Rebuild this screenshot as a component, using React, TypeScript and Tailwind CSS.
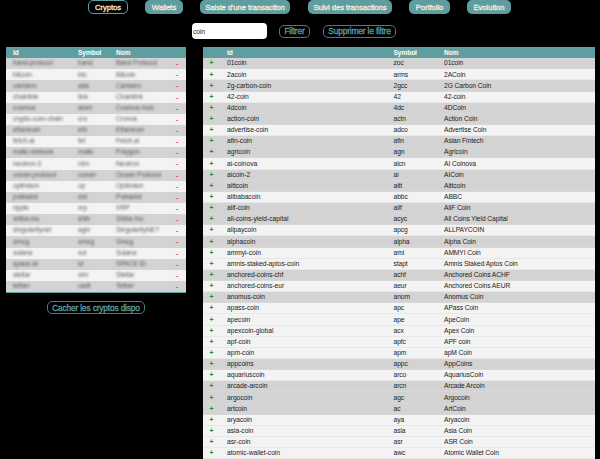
const tabs = ["Cryptos", "Wallets", "Saisie d'une transaction", "Suivi des transactions", "Portfolio", "Evolution"];
const tabStyles = [
  "w-[40px] border border-[#5f9ea0] bg-black",
  "w-[38px] ml-[17px] bg-[#5f9ea0]",
  "w-[90px] ml-[17px] bg-[#5f9ea0]",
  "w-[84px] ml-[18px] bg-[#5f9ea0]",
  "w-[41px] ml-[17px] bg-[#5f9ea0]",
  "w-[44px] ml-[17px] bg-[#5f9ea0]",
];

const owned: [string, string, string][] = [
  ["band-protocol", "band", "Band Protocol"],
  ["bitcoin", "btc", "Bitcoin"],
  ["cardano", "ada", "Cardano"],
  ["chainlink", "link", "Chainlink"],
  ["cosmos", "atom", "Cosmos Hub"],
  ["crypto-com-chain", "cro", "Cronos"],
  ["ethereum", "eth", "Ethereum"],
  ["fetch-ai", "fet", "Fetch.ai"],
  ["matic-network", "matic", "Polygon"],
  ["neutron-3", "ntrn", "Neutron"],
  ["ocean-protocol", "ocean", "Ocean Protocol"],
  ["optimism", "op", "Optimism"],
  ["polkadot", "dot", "Polkadot"],
  ["ripple", "xrp", "XRP"],
  ["shiba-inu", "shib", "Shiba Inu"],
  ["singularitynet", "agix", "SingularityNET"],
  ["smog", "smog", "Smog"],
  ["solana", "sol", "Solana"],
  ["space-id", "id", "SPACE ID"],
  ["stellar", "xlm", "Stellar"],
  ["tether", "usdt", "Tether"],
];

// The last field marks a shaded row.
const available: [string, string, string, boolean][] = [
  ["01coin", "zoc", "01coin", true],
  ["2acoin", "arms", "2ACoin", false],
  ["2g-carbon-coin", "2gcc", "2G Carbon Coin", true],
  ["42-coin", "42", "42-coin", false],
  ["4dcoin", "4dc", "4DCoin", true],
  ["action-coin", "actn", "Action Coin", true],
  ["advertise-coin", "adco", "Advertise Coin", false],
  ["afin-coin", "afin", "Asian Fintech", true],
  ["agricoin", "agn", "Agricoin", true],
  ["ai-coinova", "aicn", "AI Coinova", false],
  ["aicoin-2", "ai", "AICoin", true],
  ["aittcoin", "aitt", "Aittcoin", true],
  ["alibabacoin", "abbc", "ABBC", false],
  ["alif-coin", "alif", "AliF Coin", true],
  ["all-coins-yield-capital", "acyc", "All Coins Yield Capital", true],
  ["allpaycoin", "apcg", "ALLPAYCOIN", false],
  ["alphacoin", "alpha", "Alpha Coin", true],
  ["ammyi-coin", "ami", "AMMYI Coin", false],
  ["amnis-staked-aptos-coin", "stapt", "Amnis Staked Aptos Coin", false],
  ["anchored-coins-chf", "achf", "Anchored Coins ACHF", true],
  ["anchored-coins-eur", "aeur", "Anchored Coins AEUR", false],
  ["anomus-coin", "anom", "Anomus Coin", true],
  ["apass-coin", "apc", "APass Coin", false],
  ["apecoin", "ape", "ApeCoin", false],
  ["apexcoin-global", "acx", "Apex Coin", false],
  ["apf-coin", "apfc", "APF coin", false],
  ["apm-coin", "apm", "apM Coin", false],
  ["appcoins", "appc", "AppCoins", true],
  ["aquariuscoin", "arco", "AquariusCoin", false],
  ["arcade-arcoin", "arcn", "Arcade Arcoin", true],
  ["argocoin", "agc", "Argocoin", true],
  ["artcoin", "ac", "ArtCoin", true],
  ["aryacoin", "aya", "Aryacoin", false],
  ["asia-coin", "asia", "Asia Coin", false],
  ["asr-coin", "asr", "ASR Coin", false],
  ["atomic-wallet-coin", "awc", "Atomic Wallet Coin", false],
];

const outline =
  "flex items-center justify-center rounded-[5px] border border-[#4a7c7e] pt-px text-[8.4px] tracking-[-0.17px] text-[#5f9ea0] [-webkit-text-stroke:0.3px_#5f9ea0]";
const leftGrid = "grid h-[11.15px] grid-cols-[65px_38px_56px_1fr] items-center pl-[7px]";
const rightGrid = "grid h-[11.15px] grid-cols-[24px_166.5px_50.5px_1fr] items-center";
const header = "bg-[#5f9ea0] pt-[0.5px] text-[6.6px] font-bold text-white";
const hidden = "text-[#333] opacity-80 blur-[1.2px]";

export default function App() {
  return (
    <div className="h-[459px] w-[600px] overflow-hidden whitespace-nowrap bg-black font-['Liberation_Sans',Arial,sans-serif] text-[6.7px] leading-none tracking-[-0.08px] text-[#222]">
      <nav className="flex h-[14px] pl-[88px]">
        {tabs.map((t, i) => (
          <button
            key={t}
            className={`flex h-[14px] shrink-0 items-center justify-center rounded-[5px] pt-px text-[7.7px] tracking-[-0.08px] text-[#faebd7] [-webkit-text-stroke:0.3px_#faebd7] ${tabStyles[i]}`}
          >
            {t}
          </button>
        ))}
      </nav>
      <div className="mt-[9px] flex h-[16px] items-center pl-[192px]">
        <input
          defaultValue="coin"
          className="h-[16px] w-[75px] rounded-[4px] bg-white pl-[1px] text-[6.7px] text-[#222] outline-none"
        />
        <button className={`ml-[12px] h-[13px] w-[31px] ${outline}`}>Filtrer</button>
        <button className={`ml-[13px] h-[13px] w-[73px] ${outline}`}>Supprimer le filtre</button>
      </div>
      <main className="mt-[8px] flex items-start pl-[6px]">
        <section className="w-[180px]">
          <div className="relative border-b border-[#5f9ea0]">
            <div className={`${leftGrid} ${header}`}>
              <span>Id</span>
              <span>Symbol</span>
              <span>Nom</span>
            </div>
            {owned.map(([id, symbol, name], i) => (
              <div key={id} className={`${leftGrid} ${i % 2 === 0 ? "bg-[#d3d3d3]" : "bg-[#f3f3f3]"}`}>
                <span className={hidden}>{id}</span>
                <span className={hidden}>{symbol}</span>
                <span className={hidden}>{name}</span>
                <span className="pl-[4px] text-[7px] font-bold text-[#ff3b3b]">-</span>
              </div>
            ))}
            <div className="absolute bottom-0 left-[4px] top-[11.5px] w-[158px] backdrop-blur-[0.6px]" />
          </div>
          <div className="mt-[8px] flex justify-center">
            <button className={`h-[13px] w-[98px] ${outline}`}>Cacher les cryptos dispo</button>
          </div>
        </section>
        <section className="ml-[17px] w-[391.5px]">
          <div className={`${rightGrid} ${header}`}>
            <span />
            <span>Id</span>
            <span>Symbol</span>
            <span>Nom</span>
          </div>
          {available.map(([id, symbol, name, shaded]) => (
            <div
              key={id}
              className={`${rightGrid} border-b pt-px ${shaded ? "border-[#d8d8d8] bg-[#d3d3d3]" : "border-[#e8e8e8] bg-[#f3f3f3]"}`}
            >
              <span className="pl-[6.5px] text-[6.7px] font-bold text-[#228b22]">+</span>
              <span className="tracking-[-0.03px]">{id}</span>
              <span>{symbol}</span>
              <span>{name}</span>
            </div>
          ))}
        </section>
      </main>
    </div>
  );
}
